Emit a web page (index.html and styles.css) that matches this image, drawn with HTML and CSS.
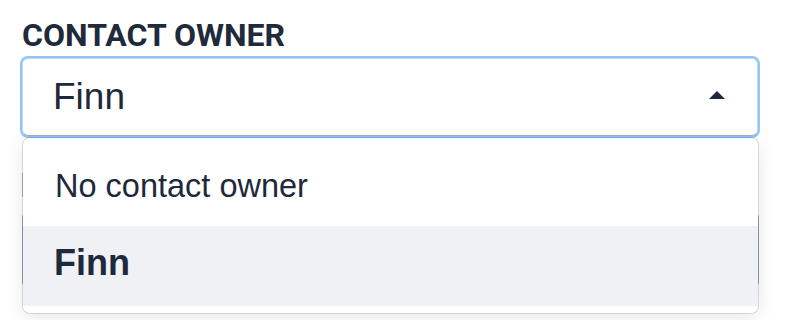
FILE: index.html
```html
<!DOCTYPE html>
<html lang="en">
<head>
<meta charset="utf-8">
<title>Contact owner</title>
<link rel="stylesheet" href="styles.css">
</head>
<body>
<div class="form">
  <label class="label">CONTACT OWNER</label>
  <div class="select">
    <div class="select-box">
      <span class="select-value">Finn</span>
      <svg class="caret" width="16" height="8" viewBox="0 0 16 8"><path d="M0 8 L8 0 L16 8 Z" fill="#1e293b"/></svg>
    </div>
    <ul class="menu">
      <li class="option">No contact owner</li>
      <li class="option option-selected">Finn</li>
    </ul>
  </div>
  <div class="under-mark"></div>
  <div class="under-input"></div>
</div>
</body>
</html>
```
FILE: styles.css
```css
html, body {
  margin: 0;
  padding: 0;
  background: #ffffff;
}
.form {
  width: 736px;
  padding: 16px 0 32px 22px;
  color: #1e293b;
}
.label {
  display: block;
  font-family: Roboto, "Liberation Sans", sans-serif;
  font-weight: 700;
  font-size: 32px;
  line-height: 38px;
  height: 38px;
  margin-bottom: 4px;
  color: #1f2a3a;
}
.select {
  position: relative;
  z-index: 2;
}
.select-box {
  box-sizing: border-box;
  height: 78px;
  border: 1px solid #cbd5e0;
  border-bottom-color: #a3afc0;
  border-radius: 6px;
  box-shadow: 0 0 0 2px #93c5fd;
  display: flex;
  align-items: center;
  justify-content: space-between;
  padding: 0 32px 0 30px;
  background: #fff;
}
.select-value {
  font-family: "Liberation Sans", Arial, sans-serif;
  font-size: 37px;
  color: #1e293b;
}
.caret {
  display: block;
  margin-top: -4px;
}
.menu {
  position: absolute;
  left: 0;
  top: calc(100% + 1px);
  width: 737px;
  box-sizing: border-box;
  margin: 0;
  padding: 8px 0 7px;
  list-style: none;
  background: #fff;
  background-clip: padding-box;
  border: 1px solid rgba(0, 0, 0, 0.12);
  border-radius: 8px;
  box-shadow: 0 4px 18px rgba(0, 0, 0, 0.09);
}
.option {
  box-sizing: border-box;
  height: 80px;
  display: flex;
  align-items: center;
  padding-left: 32px;
  font-family: "Liberation Sans", Arial, sans-serif;
  font-size: 32.5px;
  color: #1e293b;
}
.option-selected {
  background: #eff1f5;
  font-weight: 700;
  font-size: 36px;
  padding-left: 31px;
  padding-bottom: 6px;
}
.under-mark {
  margin-top: 37px;
  height: 24px;
  width: 20px;
  border-left: 1px solid #b9bfc8;
}
.under-input {
  margin-top: 15px;
  height: 76px;
  width: 737px;
  box-sizing: border-box;
  border: 1px solid #9fadc0;
  border-radius: 6px;
}
```
